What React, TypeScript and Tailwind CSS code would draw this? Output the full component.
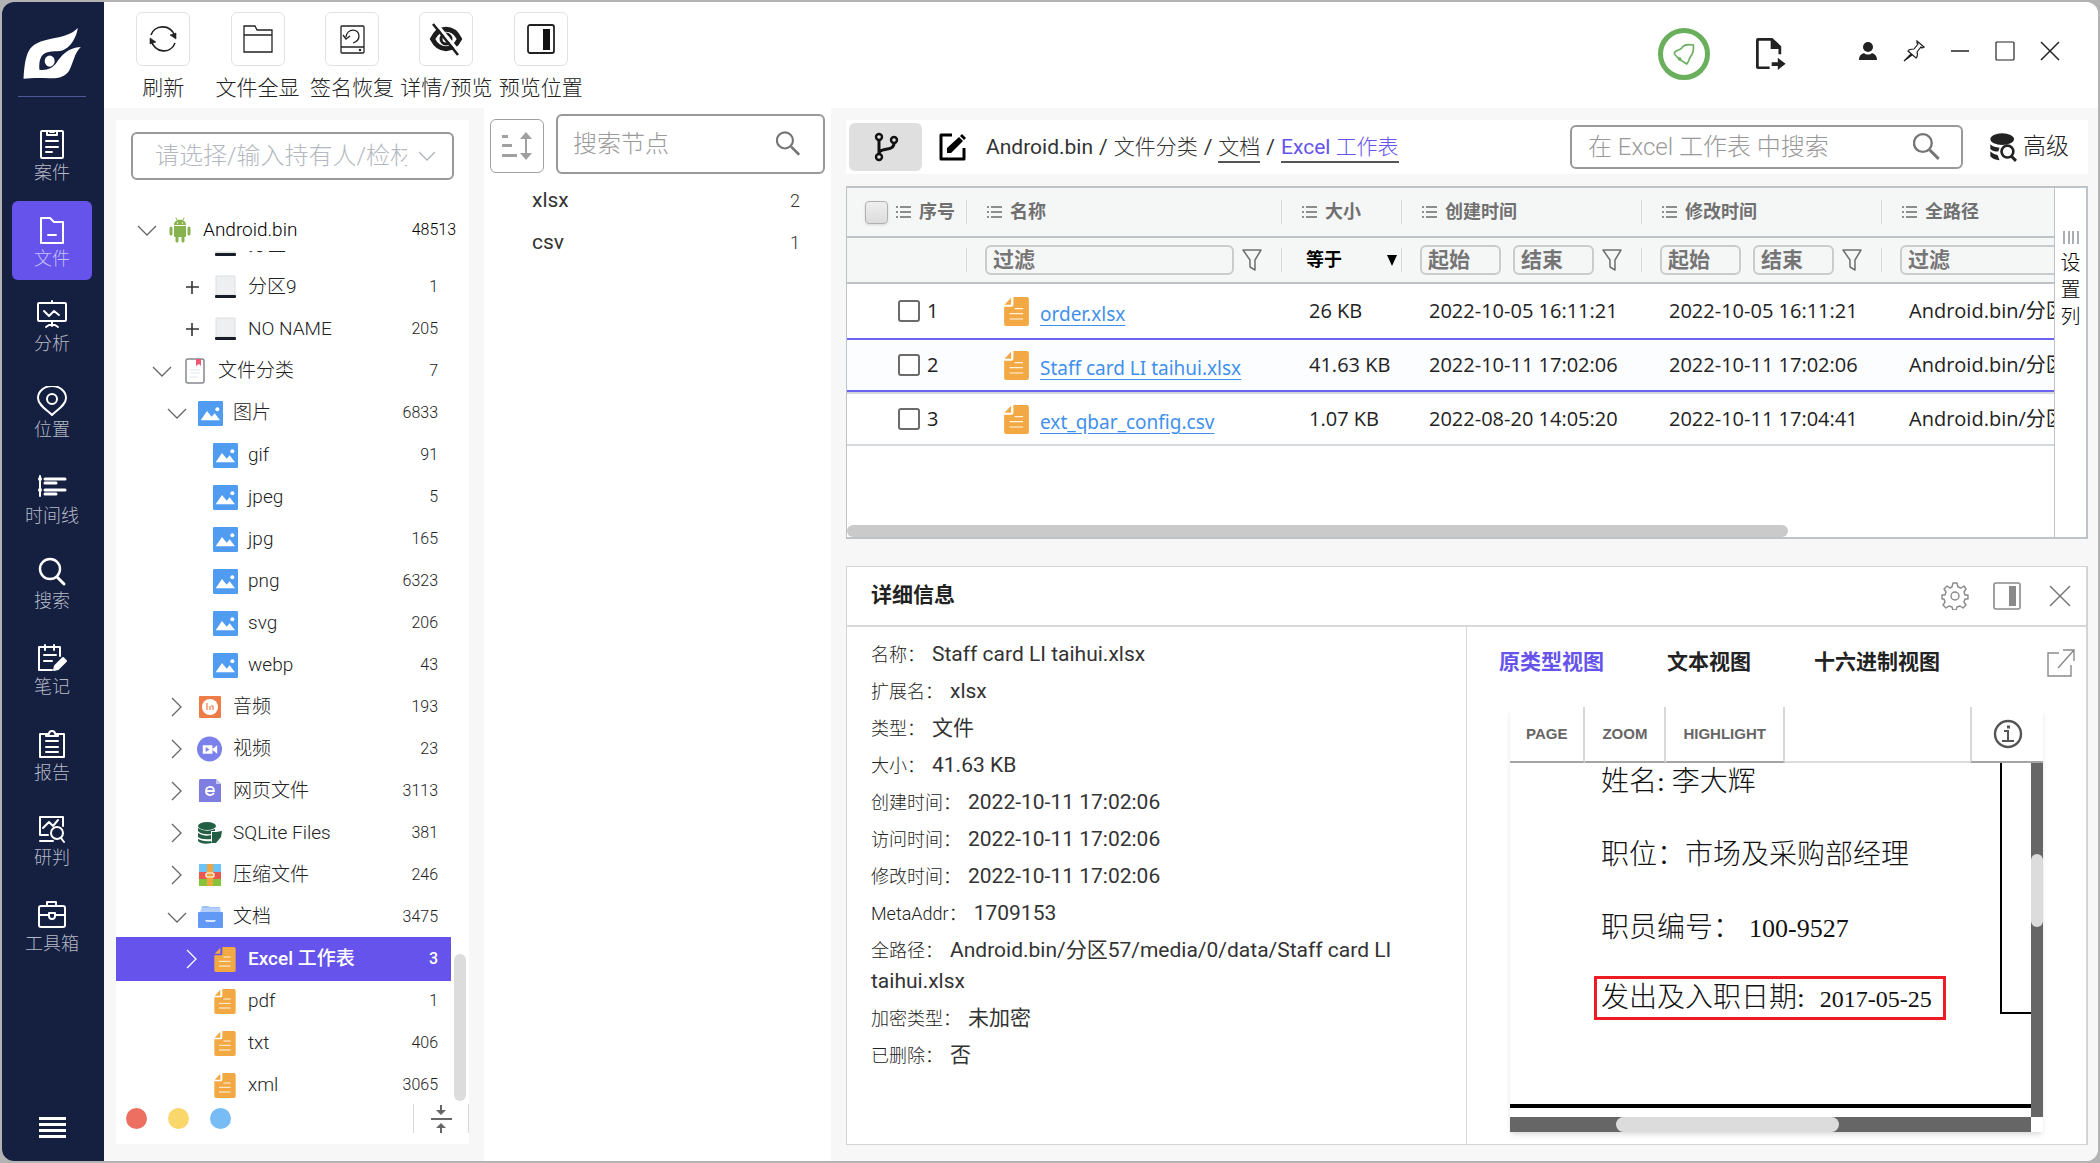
import type { ReactNode } from 'react'

type FileKind = 'drive' | 'category' | 'image' | 'audio' | 'video' | 'web' | 'sqlite' | 'zip' | 'docs' | 'doc'

interface TreeRow {
  label: string
  count?: string
  kind: FileKind
  depth: 1 | 2 | 3
  toggle?: 'open' | 'closed' | 'plus'
  selected?: boolean
}

const treeRows: TreeRow[] = [
  { label: '分区8', kind: 'drive', depth: 3 },
  { label: '分区9', count: '1', kind: 'drive', depth: 3, toggle: 'plus' },
  { label: 'NO NAME', count: '205', kind: 'drive', depth: 3, toggle: 'plus' },
  { label: '文件分类', count: '7', kind: 'category', depth: 1, toggle: 'open' },
  { label: '图片', count: '6833', kind: 'image', depth: 2, toggle: 'open' },
  { label: 'gif', count: '91', kind: 'image', depth: 3 },
  { label: 'jpeg', count: '5', kind: 'image', depth: 3 },
  { label: 'jpg', count: '165', kind: 'image', depth: 3 },
  { label: 'png', count: '6323', kind: 'image', depth: 3 },
  { label: 'svg', count: '206', kind: 'image', depth: 3 },
  { label: 'webp', count: '43', kind: 'image', depth: 3 },
  { label: '音频', count: '193', kind: 'audio', depth: 2, toggle: 'closed' },
  { label: '视频', count: '23', kind: 'video', depth: 2, toggle: 'closed' },
  { label: '网页文件', count: '3113', kind: 'web', depth: 2, toggle: 'closed' },
  { label: 'SQLite Files', count: '381', kind: 'sqlite', depth: 2, toggle: 'closed' },
  { label: '压缩文件', count: '246', kind: 'zip', depth: 2, toggle: 'closed' },
  { label: '文档', count: '3475', kind: 'docs', depth: 2, toggle: 'open' },
  { label: 'Excel 工作表', count: '3', kind: 'doc', depth: 3, toggle: 'closed', selected: true },
  { label: 'pdf', count: '1', kind: 'doc', depth: 3 },
  { label: 'txt', count: '406', kind: 'doc', depth: 3 },
  { label: 'xml', count: '3065', kind: 'doc', depth: 3 }
]

const depthClasses = {
  1: 'pl-[31px]',
  2: 'pl-[46px]',
  3: 'pl-[61px]'
}

const files = [
  { name: 'order.xlsx', size: '26 KB', created: '2022-10-05 16:11:21', modified: '2022-10-05 16:11:21' },
  { name: 'Staff card LI taihui.xlsx', size: '41.63 KB', created: '2022-10-11 17:02:06', modified: '2022-10-11 17:02:06' },
  { name: 'ext_qbar_config.csv', size: '1.07 KB', created: '2022-08-20 14:05:20', modified: '2022-10-11 17:04:41' }
]

const rowClasses = [
  'h-[56px] border-b-2 border-[#6c63f0]',
  'h-[52px] border-b-2 border-[#6c63f0] bg-[#fcfdff]',
  'h-[54px] border-y-2 border-[#d5d9dc]'
]

const details = [
  ['名称：', 'Staff card LI taihui.xlsx'],
  ['扩展名：', 'xlsx'],
  ['类型：', '文件'],
  ['大小：', '41.63 KB'],
  ['创建时间：', '2022-10-11 17:02:06'],
  ['访问时间：', '2022-10-11 17:02:06'],
  ['修改时间：', '2022-10-11 17:02:06'],
  ['MetaAddr：', '1709153'],
  ['全路径：', 'Android.bin/分区57/media/0/data/Staff card LI taihui.xlsx'],
  ['加密类型：', '未加密'],
  ['已删除：', '否']
]

function Logo() {
  return (
    <svg className="h-[51px] w-[58px]" viewBox="42 54 174 154" fill="#fff">
      <path d="M43 207C45 172 48 145 58 125C70 102 95 93 130 86C162 80 190 72 207 54C203 82 186 112 160 122C142 127 112 119 97 140C90 152 90 168 91 180C115 183 132 174 143 158C156 138 178 112 216 111C196 130 194 158 181 182C170 200 150 207 120 206C90 204 65 205 43 207Z" />
      <ellipse cx="122" cy="154" rx="15" ry="17" />
    </svg>
  )
}

// Sidebar glyphs share a 30x30 grid with a 2px stroke
function NavIcon({ children }: { children: ReactNode }) {
  return (
    <svg
      className="size-[30px]"
      viewBox="0 0 30 30"
      fill="none"
      stroke="#fff"
      strokeWidth="2"
      strokeLinecap="round"
      strokeLinejoin="round"
    >
      {children}
    </svg>
  )
}

const navItems: { label: string; icon: ReactNode; active?: boolean }[] = [
  {
    label: '案件',
    icon: (
      <>
        <rect x="4" y="2" width="22" height="27" rx="1" />
        <path d="M10 2v4h10V2M13 3h4M9 12h12M9 18h12M9 23h6" />
      </>
    )
  },
  {
    label: '文件',
    active: true,
    icon: <path d="M4 3h9l4 4h9v21H4zM11 20h8" />
  },
  {
    label: '分析',
    icon: (
      <>
        <path d="M15 1v2M15 21v5M9 27l3-2h6l3 2" />
        <rect x="1" y="3" width="28" height="18" rx="1" />
        <path d="M7 11l5 5 5-5 5 4" />
      </>
    )
  },
  {
    label: '位置',
    icon: (
      <>
        <path d="M15 29C10 24 1 19 1 12a14 12 0 0 1 28 0c0 7-9 12-14 17z" />
        <circle cx="15" cy="13" r="5" />
      </>
    )
  },
  {
    label: '时间线',
    icon: (
      <>
        <path strokeWidth="3" d="M8 7h20M8 11h11M8 18h20M8 22h11" />
        <path d="M3 4v20" />
        <circle cx="3" cy="7" r="1" />
        <circle cx="3" cy="18" r="1" />
      </>
    )
  },
  {
    label: '搜索',
    icon: (
      <>
        <circle cx="13" cy="12" r="10" strokeWidth="2.400" />
        <path strokeWidth="3" d="M20 20l7 7" />
      </>
    )
  },
  {
    label: '笔记',
    icon: (
      <>
        <path d="M15 27H2V4h21v9M8 2v5M17 2v5M7 12h12M7 18h8" />
        <path fill="#fff" d="M17 27l1-4 8-8 3 3-8 8z" />
      </>
    )
  },
  {
    label: '报告',
    icon: <path d="M8 5H3v23h24V5h-5M9 7V5h3c0-4 6-4 6 0h3v2zM9 12h12M9 18h12M9 23h12" />
  },
  {
    label: '研判',
    icon: (
      <>
        <path d="M26 12V3H3v18h8M3 27h13M6 14l6-6 4 4 5-6" />
        <circle cx="20" cy="19" r="6" />
        <path d="M24 24l3 4" />
      </>
    )
  },
  {
    label: '工具箱',
    icon: (
      <>
        <rect x="2" y="6" width="26" height="21" rx="2" />
        <path d="M10 6V2h9v4M2 15h10M18 15h10M12 13v3c0 4 6 4 6 0v-3z" />
      </>
    )
  }
]

function Sidebar() {
  return (
    <nav className="flex w-[102px] shrink-0 flex-col items-center bg-[#151f40] pt-[26px] pr-[2px]">
      <Logo />
      <div className="mt-[17px] h-px w-[68px] bg-[#4b5797]" />
      <div className="mt-[15px] grid h-[857px] auto-rows-fr">
        {navItems.map((item) => (
          <button
            key={item.label}
            type="button"
            className={`my-[3px] flex w-[80px] flex-col items-center justify-center rounded-md pt-[6px] text-lg leading-[28px] font-light ${
              item.active ? 'bg-[#6553ec] text-[#c5c0f8]' : 'text-[#b4b9c6]'
            }`}
          >
            <NavIcon>{item.icon}</NavIcon>
            {item.label}
          </button>
        ))}
      </div>
      <button type="button" aria-label="菜单" className="mt-auto mb-[23px] flex w-[27px] flex-col gap-[3px]">
        <span className="h-[3px] bg-white" />
        <span className="h-[3px] bg-white" />
        <span className="h-[3px] bg-white" />
        <span className="h-[3px] bg-white" />
      </button>
    </nav>
  )
}

const tools = [
  {
    label: '刷新',
    icon: (
      <svg className="size-[30px]" viewBox="0 0 30 30" fill="none" stroke="#222" strokeWidth="1.6">
        <path d="M3 11C6 1 22 -1 27 12M27 19C23 30 7 30 3 16" />
        <path fill="#222" d="M22 11l6 4V9zM8 18l-6-4v6z" strokeWidth="0.6" />
      </svg>
    )
  },
  {
    label: '文件全显',
    icon: (
      <svg className="size-[30px]" viewBox="0 0 30 30" fill="none" stroke="#222" strokeWidth="1.3">
        <path d="M1 2h11l2 4h15v22H1zM1 11h28" />
      </svg>
    )
  },
  {
    label: '签名恢复',
    icon: (
      <svg className="size-[30px]" viewBox="0 0 30 30" fill="none" stroke="#222" strokeWidth="1.3">
        <rect x="4" y="2" width="23" height="27" rx="1" />
        <path d="M4 23h23M9 13c1-9 13-9 13-1 0 4-3 6-6 7M6 11l3 4 4-3" />
        <circle cx="23" cy="26" r="0.6" />
      </svg>
    )
  },
  {
    label: '详情/预览',
    icon: (
      <svg className="size-[34px]" viewBox="0 0 34 34" fill="none" stroke="#1c1c1c">
        <path strokeWidth="5" d="M3.500 17C10 4 24 4 30.500 17C24 30 10 30 3.500 17z" />
        <circle cx="17" cy="17" r="5" strokeWidth="3" />
        <path stroke="#fff" strokeWidth="3" d="M6 0l25 31" />
        <path strokeWidth="2.500" d="M4 2l25 31" />
      </svg>
    )
  },
  {
    label: '预览位置',
    icon: (
      <svg className="size-[30px]" viewBox="0 0 30 30" fill="none" stroke="#222" strokeWidth="1.800">
        <rect x="2" y="1" width="26" height="28" rx="2" />
        <rect x="17" y="5" width="7" height="21" fill="#111" stroke="none" />
      </svg>
    )
  }
]

function TopBar() {
  return (
    <header className="flex h-[106px] shrink-0 justify-between bg-white pr-[38px] pl-3">
      <div className="grid w-[472px] grid-cols-5 pt-[10px]">
        {tools.map((tool) => (
          <button key={tool.label} type="button" className="flex flex-col items-center gap-2 self-start">
            <span className="flex size-[54px] items-center justify-center rounded-md border border-[#e2e2e2]">
              {tool.icon}
            </span>
            <span className="text-[21px] leading-[28px] font-light whitespace-nowrap text-[#222]">{tool.label}</span>
          </button>
        ))}
      </div>
      <div className="flex items-start pt-[26px]">
        <button
          type="button"
          aria-label="通知"
          className="flex size-[52px] items-center justify-center rounded-full border-[5px] border-[#69af5c]"
        >
          <svg className="size-[22px]" viewBox="102 98 64 66" fill="none" stroke="#69af5c" strokeWidth="5">
            <path d="M105 128C108 118 125 120 128 112C134 102 150 102 162 104C163 116 162 130 154 138C147 146 150 155 142 161L122 148C116 140 106 138 105 128Z" />
            <circle cx="121" cy="146" r="3" fill="#69af5c" />
          </svg>
        </button>
        <button type="button" aria-label="导出" className="mt-[10px] ml-[46px]">
          <svg className="h-[32px] w-[30px]" viewBox="348 84 88 94" fill="#222">
            <path d="M354 84H396L422 108V132H414V116H391V92H356V168H388V175H354Q348 175 348 170V90Q348 84 354 84Z" />
            <path d="M394 155h18v-13l23 18-23 18v-12h-18z" />
          </svg>
        </button>
        <div className="mt-[12px] ml-[72px] flex items-center gap-[25px]">
          <button type="button" aria-label="用户">
            <svg className="size-5" viewBox="0 0 20 20" fill="#222">
              <circle cx="10" cy="6" r="5" />
              <path d="M1 19c0-5 3-6 5-7 2 2 6 2 8 0 2 1 5 2 5 7z" />
            </svg>
          </button>
          <button type="button" aria-label="置顶">
            <svg className="size-[22px]" viewBox="0 0 22 22" fill="none" stroke="#222" strokeWidth="1.200">
              <path d="M14 1l7 6-2 1-1-1-4 5c1 3 0 5-1 6l-8-7c1-2 3-2 6-2l4-5-1-1zM8 14l-7 7M9 15l-8 6" />
            </svg>
          </button>
          <button type="button" aria-label="最小化">
            <svg className="size-5" viewBox="0 0 20 20" stroke="#222" strokeWidth="1.500">
              <path d="M1 10h18" />
            </svg>
          </button>
          <button type="button" aria-label="最大化">
            <svg className="size-5" viewBox="0 0 20 20" fill="none" stroke="#222" strokeWidth="1.200">
              <rect x="1" y="1" width="18" height="18" rx="1" />
            </svg>
          </button>
          <button type="button" aria-label="关闭">
            <svg className="size-5" viewBox="0 0 20 20" stroke="#222" strokeWidth="1.500">
              <path d="M1 1l18 18M19 1L1 19" />
            </svg>
          </button>
        </div>
      </div>
    </header>
  )
}

function DocIcon({ className = 'h-[25px] w-[22px]' }: { className?: string }) {
  return (
    <svg className={className} viewBox="0 0 64 75">
      <path fill="#f2a944" d="M24 0H59Q64 0 64 5V70Q64 75 59 75H5Q0 75 0 70V25H19Q24 25 24 20ZM18 2V20H1Z" />
      <path stroke="#fff3df" strokeWidth="3" d="M27 30h22M14 43h35M14 57h35" />
    </svg>
  )
}

function AndroidIcon() {
  return (
    <svg className="h-[26px] w-[22px]" viewBox="0 0 22 26" fill="#86b34d" strokeLinecap="round">
      <path d="M5 8c0-7 12-7 12 0zM5 9h12v10q0 1-1 1H6q-1 0-1-1z" />
      <path stroke="#86b34d" strokeWidth="3" d="M2 11v6M20 11v6M8 19v5M14 19v5" />
      <path stroke="#86b34d" d="M7 1l1 2M15 1l-1 2" />
      <path stroke="#fff" strokeWidth="1.400" d="M8.500 6h0.010M13.500 6h0.010" />
    </svg>
  )
}

function KindIcon({ kind }: { kind: FileKind }) {
  switch (kind) {
    case 'drive':
      return (
        <svg className="h-[24px] w-[21px]" viewBox="0 0 21 24">
          <path fill="#eeeff1" stroke="#dcdee0" d="M1 1h19l0 19H1z" />
          <rect y="20" width="21" height="3" rx="1" fill="#161d29" />
        </svg>
      )
    case 'category':
      return (
        <svg className="h-[26px] w-[20px]" viewBox="0 0 20 26">
          <rect x="1" y="1" width="18" height="24" rx="2" fill="#fff" stroke="#85888f" strokeWidth="1.500" />
          <path fill="#ef5777" d="M11 1h5v7l-2-2-3 2z" />
          <path stroke="#e3e5ea" d="M5 12h10M5 15h10M5 19h8" />
        </svg>
      )
    case 'image':
      return (
        <svg className="size-[25px]" viewBox="0 0 75 75">
          <rect width="75" height="75" rx="4" fill="#4f9cf0" />
          <path fill="#fff" d="M8 58L27 30L41 47L50 37L66 58Z" />
          <circle cx="58" cy="25" r="6" fill="#fff" />
        </svg>
      )
    case 'audio':
      return (
        <svg className="size-[22px]" viewBox="0 0 22 22">
          <rect width="22" height="22" rx="1" fill="#ee7c48" />
          <circle cx="11" cy="11" r="8" fill="#fff" />
          <path stroke="#ee7c48" strokeWidth="1.200" fill="none" d="M8 7v7M11 14v-4M14 14v-4h-2" />
        </svg>
      )
    case 'video':
      return (
        <svg className="size-[27px]" viewBox="0 0 27 27">
          <circle cx="13" cy="13" r="13" fill="#7b81ea" />
          <path fill="#fff" d="M6 9h10v9H6zM16 13l5-4v9l-5-4z" />
          <path fill="#7b81ea" d="M9 11l4 2.500-4 2.500z" />
        </svg>
      )
    case 'web':
      return (
        <svg className="h-[24px] w-[22px]" viewBox="0 0 22 24" fill="none">
          <path fill="#7e7ee0" d="M1 0h16l5 5v18H0V1z" />
          <path fill="#c9c8f4" d="M17 0v5h5z" />
          <path stroke="#fff" strokeWidth="1.800" d="M7 12h8c0-6-8-5-8 0 0 5 6 5 8 2" />
        </svg>
      )
    case 'sqlite':
      return (
        <svg className="h-[22px] w-[24px]" viewBox="0 0 24 22" fill="#235f44">
          <ellipse cx="9" cy="4" rx="9" ry="4" />
          <path d="M0 6q8 5 17 1v2h-4v3Q4 13 0 9zM0 11q6 4 13 2v4Q4 18 0 15zM0 17q6 3 13 2l1 2Q4 23 0 19zM14 10h4l6-1-1 6-5 6h-4z" />
        </svg>
      )
    case 'zip':
      return (
        <svg className="size-[22px]" viewBox="0 0 22 22">
          <path fill="#6cc3f7" d="M0 0h22v8H0z" />
          <path fill="#e9564e" d="M0 8h22v7H0z" />
          <path fill="#86c43c" d="M0 15h22v7H0z" />
          <path fill="#f0a63c" d="M8 0h6v22H8z" />
          <rect x="7" y="9" width="8" height="4" rx="1" fill="#f0a63c" stroke="#fff" strokeWidth="1.200" />
        </svg>
      )
    case 'docs':
      return (
        <svg className="h-[22px] w-[25px]" viewBox="0 0 25 22">
          <path fill="#9cc0fa" d="M4 0h6l2 1h10l1 6H2z" />
          <path stroke="#d7e5fd" strokeWidth="0.800" d="M3 3h20M3 5h20" />
          <rect y="6" width="25" height="16" rx="1" fill="#6199f5" />
          <path stroke="#fff" strokeWidth="1.300" fill="none" d="M8 14q0 1 1 1h7q1 0 1-1" />
        </svg>
      )
    default:
      return <DocIcon />
  }
}

function Toggle({ state, light }: { state?: TreeRow['toggle']; light?: boolean }) {
  const stroke = light ? '#fff' : '#666'
  return (
    <span className="flex w-[30px] shrink-0 justify-center">
      {state && (
        <svg className="size-5" viewBox="0 0 20 20" fill="none" stroke={stroke} strokeWidth="1.300">
          {state === 'open' && <path d="M1 6l9 9 9-9" />}
          {state === 'closed' && <path d="M5 1l9 9-9 9" />}
          {state === 'plus' && <path stroke="#333" strokeWidth="1.600" d="M4 10h13M10 4v13" />}
        </svg>
      )}
    </span>
  )
}

function FileTree() {
  return (
    <aside className="flex w-[380px] shrink-0 flex-col bg-[#f7f7f7] pt-3 pr-[15px] pb-[17px] pl-3">
      <div className="flex min-h-0 flex-1 flex-col bg-white pt-3">
        <div className="mx-[15px] flex h-[48px] shrink-0 items-center rounded-md border-2 border-[#999] pl-[22px]">
          <input
            aria-label="持有人/检材"
            placeholder="请选择/输入持有人/检材"
            className="w-[252px] text-2xl font-light outline-none placeholder:text-[#b4b8c0]"
          />
          <svg className="ml-3 size-4" viewBox="0 0 16 16" fill="none" stroke="#b0b4bc" strokeWidth="1.300">
            <path d="M0 4l8 8 8-8" />
          </svg>
        </div>
        <div className="mt-[29px] flex h-[42px] shrink-0 items-center pr-[13px] pl-4">
          <Toggle state="open" />
          <span className="ml-[5px] flex w-[26px] justify-center">
            <AndroidIcon />
          </span>
          <span className="ml-[10px] flex-1 text-[19px] font-light text-black">Android.bin</span>
          <span className="text-base font-light text-black">48513</span>
        </div>
        <div className="relative min-h-0 flex-1 overflow-hidden">
          <ul className="-mt-[27px] w-[335px]">
            {treeRows.map((row) => (
              <li
                key={row.label}
                className={`flex items-center pr-[13px] ${depthClasses[row.depth]} ${
                  row.selected ? '-my-px h-[44px] bg-[#6553ec] font-medium text-white' : 'h-[42px] font-light text-[#222]'
                }`}
              >
                <Toggle state={row.toggle} light={row.selected} />
                <span className="ml-[5px] flex w-[26px] shrink-0 justify-center">
                  <KindIcon kind={row.kind} />
                </span>
                <span className="ml-[10px] flex-1 text-[19px]">{row.label}</span>
                <span className="text-base">{row.count}</span>
              </li>
            ))}
          </ul>
          <div className="absolute right-[3px] bottom-[3px] h-[147px] w-3 rounded-full bg-[#dcdcdc]" />
        </div>
        <div className="flex h-[40px] shrink-0 items-start justify-between pl-[10px]">
          <div className="flex gap-[21px] pt-1">
            <span className="size-[21px] rounded-full bg-[#ec6f62]" />
            <span className="size-[21px] rounded-full bg-[#f9d76b]" />
            <span className="size-[21px] rounded-full bg-[#77bcf5]" />
          </div>
          <button
            type="button"
            aria-label="折叠"
            className="flex h-[29px] w-[56px] items-center justify-center border-x border-[#d8d8d8]"
          >
            <svg className="h-[28px] w-[21px]" viewBox="0 0 21 28" fill="#666">
              <path d="M0 13h21v2H0zM9 0h2v5h4l-5 5-5-5h4zM9 28h2v-5h4l-5-5-5 5h4z" />
            </svg>
          </button>
        </div>
      </div>
    </aside>
  )
}

function SearchIcon({ className = 'size-[28px]' }: { className?: string }) {
  return (
    <svg className={className} viewBox="0 0 28 28" fill="none" stroke="#757575">
      <circle cx="10" cy="10" r="9" strokeWidth="2.400" />
      <path strokeWidth="3" d="M17 17l9 9" />
    </svg>
  )
}

function NodeList() {
  return (
    <section className="w-[347px] shrink-0 bg-white px-[6px] pt-[6px]">
      <div className="flex items-center gap-3">
        <button
          type="button"
          aria-label="排序"
          className="mt-1 flex size-[54px] items-center justify-center rounded-md border border-[#a0a0a0]"
        >
          <svg className="h-[28px] w-[31px]" viewBox="0 0 31 28" fill="#a0a0a0">
            <path d="M0 3h6v3H0zM0 12h10v3H0zM0 22h15v3H0zM23 7h-5l6-7 6 7h-5v14h5l-6 7-6-7h5z" />
          </svg>
        </button>
        <div className="flex h-[60px] flex-1 items-center rounded-md border-2 border-[#999] pr-[22px] pl-[15px]">
          <input
            aria-label="搜索节点"
            placeholder="搜索节点"
            className="w-full min-w-0 text-2xl font-light outline-none placeholder:text-[#9a9a9a]"
          />
          <SearchIcon />
        </div>
      </div>
      <ul className="mt-[6px] pr-[25px] pl-[42px] text-[#333]">
        <li className="flex h-[42px] items-center justify-between text-[21px]">
          xlsx <span className="text-lg font-light">2</span>
        </li>
        <li className="flex h-[42px] items-center justify-between text-[21px]">
          csv <span className="text-lg font-light">1</span>
        </li>
      </ul>
    </section>
  )
}

function Breadcrumb() {
  return (
    <div className="flex h-[54px] shrink-0 items-center bg-white pr-[19px] pl-[3px] text-[21px] text-[#333]">
      <button
        type="button"
        aria-label="分支"
        className="flex h-[48px] w-[73px] items-center justify-center rounded-md bg-[#dfdfdf]"
      >
        <svg className="h-[30px] w-[26px]" viewBox="0 0 26 30" fill="none" stroke="#111" strokeWidth="2.400">
          <circle cx="6" cy="5" r="3" />
          <circle cx="21" cy="8" r="3" />
          <circle cx="6" cy="25" r="3" />
          <path strokeWidth="3" d="M6 8v14M21 11c0 9-13 4-15 10" />
        </svg>
      </button>
      <button type="button" aria-label="编辑路径" className="ml-[17px]">
        <svg className="h-[28px] w-[28px]" viewBox="0 0 28 28" fill="none" stroke="#000" strokeWidth="3">
          <path strokeLinejoin="round" d="M13 2H2v24h23V15" />
          <path fill="#000" stroke="none" d="M8 20v-5L20 4l4 4-12 12zM21 3l2-2 4 4-2 2z" />
        </svg>
      </button>
      <div className="ml-[19px] flex items-center gap-[6px] pt-[2px] whitespace-nowrap">
        <a href="#root-node">Android.bin</a>
        <span>/</span>
        <a href="#category" className="font-light">
          文件分类
        </a>
        <span>/</span>
        <a href="#docs" className="border-b-2 border-[#555] leading-[28px] font-light">
          文档
        </a>
        <span>/</span>
        <a href="#excel" className="border-b-2 border-[#555] leading-[28px] text-[#6553ec]">
          Excel <span className="font-light">工作表</span>
        </a>
      </div>
      <div className="ml-auto flex h-[44px] w-[393px] items-center rounded-md border-2 border-[#999] pr-5 pl-4">
        <input
          aria-label="在 Excel 工作表 中搜索"
          placeholder="在 Excel 工作表 中搜索"
          className="w-full min-w-0 text-2xl font-light outline-none placeholder:text-[#999]"
        />
        <SearchIcon className="size-[30px]" />
      </div>
      <button type="button" className="ml-[27px] flex items-center gap-[6px] text-[23px] font-light text-[#222]">
        <svg className="h-[29px] w-[27px]" viewBox="1049 368 82 87" fill="#222">
          <ellipse cx="1086" cy="386" rx="36" ry="18" />
          <path d="M1050 402q10 10 28 10l-4 12q-16 0-24-8zM1050 424q8 8 22 10l6 16q-20-2-28-12z" />
          <circle cx="1102" cy="424" r="18" fill="#fff" stroke="#222" strokeWidth="8" />
          <path stroke="#222" strokeWidth="9" d="M1114 438l14 14" />
        </svg>
        高级
      </button>
    </div>
  )
}

function HeadCell({ label, last, children }: { label: string; last?: boolean; children?: ReactNode }) {
  return (
    <th scope="col" className="border-b-2 border-[#bdc3c7] p-0 text-left font-bold">
      <div
        className={`flex h-6 items-center gap-2 ${children ? 'pl-[18px]' : 'pl-5'} ${
          last ? '' : 'border-r border-[#d5d9da]'
        }`}
      >
        {children}
        <svg className="h-[14px] w-[15px] shrink-0" viewBox="0 0 15 14" stroke="#6b6b6b" strokeWidth="1.500">
          <path d="M0 2h2M4 2h11M0 7h2M4 7h11M0 12h2M4 12h11" />
        </svg>
        {label}
      </div>
    </th>
  )
}

function Funnel() {
  return (
    <svg className="h-[22px] w-[20px] shrink-0" viewBox="0 0 20 22" fill="none" stroke="#707070" strokeWidth="1.500">
      <path strokeLinejoin="round" d="M1 1h18l-6 10v10l-5-3v-7z" />
    </svg>
  )
}

const filterInput =
  'h-[30px] min-w-0 rounded-md border-2 border-[#c9cccc] bg-transparent px-[6px] text-[21px] font-bold outline-none placeholder:text-[#757575]'

function RangeFilter({ label }: { label: string }) {
  return (
    <td className="border-b-2 border-[#bdc3c7] p-0">
      <div className="flex h-6 items-center border-r border-[#d5d9da] pl-[18px]">
        <input aria-label={`${label}起始`} placeholder="起始" className={`${filterInput} w-[81px]`} />
        <input aria-label={`${label}结束`} placeholder="结束" className={`${filterInput} mr-2 ml-3 w-[81px]`} />
        <Funnel />
      </div>
    </td>
  )
}

function FileTable() {
  return (
    <section className="flex min-h-0 flex-[351] border-2 border-l border-[#bdc3c7] bg-white">
      <div className="flex min-w-0 flex-1 flex-col overflow-hidden">
        <table className="w-[1551px] table-fixed border-separate border-spacing-0 text-xl text-[#222]">
          <colgroup>
            <col className="w-[120px]" />
            <col className="w-[315px]" />
            <col className="w-[120px]" />
            <col className="w-[240px]" />
            <col className="w-[240px]" />
            <col />
          </colgroup>
          <thead className="bg-[#f5f7f7] text-lg text-[#707070]">
            <tr className="h-[50px]">
              <HeadCell label="序号">
                <input
                  type="checkbox"
                  aria-label="全选"
                  className="size-[23px] shrink-0 appearance-none rounded-sm border border-[#b0b0b0] bg-linear-to-b from-[#efefef] to-[#dcdcdc] shadow-sm"
                />
              </HeadCell>
              <HeadCell label="名称" />
              <HeadCell label="大小" />
              <HeadCell label="创建时间" />
              <HeadCell label="修改时间" />
              <HeadCell label="全路径" last />
            </tr>
            <tr className="h-[46px]">
              <td className="border-b-2 border-[#bdc3c7] p-0">
                <div className="h-6 border-r border-[#d5d9da]" />
              </td>
              <td className="border-b-2 border-[#bdc3c7] p-0">
                <div className="flex h-6 items-center gap-2 border-r border-[#d5d9da] pl-[18px]">
                  <input aria-label="名称过滤" placeholder="过滤" className={`${filterInput} w-[249px]`} />
                  <Funnel />
                </div>
              </td>
              <td className="border-b-2 border-[#bdc3c7] p-0">
                <div className="flex h-6 items-center justify-between border-r border-[#d5d9da] pr-1 pl-6">
                  <select aria-label="大小条件" className="appearance-none bg-transparent font-bold text-black">
                    <option>等于</option>
                  </select>
                  <svg className="h-[11px] w-[10px]" viewBox="0 0 10 11">
                    <path d="M0 0h10L5 11z" />
                  </svg>
                </div>
              </td>
              <RangeFilter label="创建时间" />
              <RangeFilter label="修改时间" />
              <td className="border-b-2 border-[#bdc3c7] p-0">
                <div className="flex h-6 items-center pl-[18px]">
                  <input aria-label="全路径过滤" placeholder="过滤" className={`${filterInput} w-[400px]`} />
                </div>
              </td>
            </tr>
          </thead>
          <tbody className="font-['Open_Sans','Noto_Sans_CJK_SC',sans-serif]">
            {files.map((file, i) => (
              <tr key={file.name}>
                <td className={`p-0 ${rowClasses[i]}`}>
                  <label className="flex items-center gap-[7px] pl-[51px]">
                    <input
                      type="checkbox"
                      className="size-[22px] appearance-none rounded-[3px] border-2 border-[#6b6b6b] bg-white"
                    />
                    {i + 1}
                  </label>
                </td>
                <td className={`p-0 ${rowClasses[i]}`}>
                  <div className="flex items-center gap-[11px] pl-[37px]">
                    <DocIcon className="h-[29px] w-[25px]" />
                    <a
                      href="#file"
                      className="pt-[6px] font-['Noto_Sans',sans-serif] text-[19px] text-[#3f90ec] underline underline-offset-4"
                    >
                      {file.name}
                    </a>
                  </div>
                </td>
                <td className={`p-0 pl-[27px] whitespace-nowrap ${rowClasses[i]}`}>{file.size}</td>
                <td className={`p-0 pl-[27px] whitespace-nowrap ${rowClasses[i]}`}>{file.created}</td>
                <td className={`p-0 pl-[27px] whitespace-nowrap ${rowClasses[i]}`}>{file.modified}</td>
                <td className={`p-0 pl-[27px] whitespace-nowrap ${rowClasses[i]}`}>Android.bin/分区57/media/0</td>
              </tr>
            ))}
          </tbody>
        </table>
        <div className="mt-auto h-3 w-[78%] rounded-full bg-[#cacaca]" />
      </div>
      <button
        type="button"
        className="flex w-[32px] shrink-0 flex-col items-center border-l border-[#bdc3c7] pt-[43px] text-xl leading-[27px] text-[#222]"
      >
        <svg className="mb-[6px] h-[13px] w-[16px]" viewBox="0 0 16 13" stroke="#8c9498" strokeWidth="1.500">
          <path d="M1 0v13M6 0v13M10 0v13M15 0v13" />
        </svg>
        <span className="w-5 font-light break-all text-black">设置列</span>
      </button>
    </section>
  )
}

function DocumentPreview() {
  return (
    <div className="mr-[43px] ml-[43px] flex min-h-0 flex-1 flex-col bg-white shadow-md">
      <div className="flex h-[56px] shrink-0 font-['Liberation_Sans',sans-serif] text-[15px] font-bold text-[#666]">
        <button type="button" className="border-r-2 border-b-2 border-r-[#d8d8d8] border-b-[#a5a5a5] px-4">
          PAGE
        </button>
        <button type="button" className="border-r-2 border-b-2 border-r-[#d8d8d8] border-b-[#a5a5a5] px-[17px]">
          ZOOM
        </button>
        <button type="button" className="border-r-2 border-b-2 border-r-[#d8d8d8] border-b-[#a5a5a5] px-[17px]">
          HIGHLIGHT
        </button>
        <div className="flex-1 border-b-2 border-[#dcdcdc]" />
        <button
          type="button"
          aria-label="信息"
          className="flex w-[73px] items-center justify-center border-b-2 border-l-2 border-b-[#a5a5a5] border-l-[#d8d8d8]"
        >
          <svg className="size-[30px]" viewBox="0 0 30 30" fill="none" stroke="#555" strokeWidth="2">
            <circle cx="15" cy="15" r="13" strokeWidth="2.400" />
            <path d="M11 12h4v10M9 22h12" />
            <path strokeWidth="3" d="M14 8h3" />
          </svg>
        </button>
      </div>
      <div className="flex min-h-0 flex-1">
        <div className="flex min-w-0 flex-1 flex-col">
          <div className="flex min-h-0 flex-1 justify-between border-b-4 border-black font-['Liberation_Serif','Noto_Sans_CJK_SC',serif] text-[28px] leading-[38px] font-light text-[#111]">
            <div className="flex flex-col items-start gap-[35px] pl-[84px] whitespace-nowrap">
              <p className="pl-[7px]">姓名: 李大辉</p>
              <p className="pl-[7px]">职位：市场及采购部经理</p>
              <p className="pl-[7px]">
                职员编号：<span className="ml-2 text-[26px]">100-9527</span>
              </p>
              <p className="-mt-[7px] border-[3px] border-[#ed1c24] pr-[11px] pl-1">
                发出及入职日期: <span className="ml-2 text-2xl">2017-05-25</span>
              </p>
            </div>
            <div className="h-[251px] w-[31px] border-b-2 border-l-2 border-black" />
          </div>
          <div className="mt-[9px] flex h-[15px] shrink-0 bg-[#666] pl-[106px]">
            <div className="w-[223px] rounded-full bg-[#dcdcdc]" />
          </div>
        </div>
        <div className="mb-[15px] w-3 shrink-0 bg-[#666] pt-[91px]">
          <div className="h-[73px] rounded-full bg-[#dcdcdc]" />
        </div>
      </div>
    </div>
  )
}

function DetailPanel() {
  return (
    <section className="flex min-h-0 flex-[580] flex-col border border-r-2 border-[#d4d4d4] bg-white">
      <div className="flex h-[60px] shrink-0 items-center justify-between border-b-2 border-[#d8d8d8] pr-[15px] pl-6">
        <h2 className="text-[21px] font-bold text-[#222]">详细信息</h2>
        <div className="flex items-center gap-[28px]">
          <button type="button" aria-label="设置">
            <svg className="size-[28px]" viewBox="0 0 28 28" fill="none" stroke="#8a8a8a" strokeWidth="1.400">
              <path
                strokeLinejoin="round"
                d="M12 1h4l1 4 3 1 3-2 2 3-2 3 1 3 3 0v4h-3l-1 3 2 3-3 3-3-2-3 1-1 3h-3l-1-3-3-1-3 2-3-3 2-3-1-3H1v-4h3l1-3-2-3 3-3 3 2 2-1z"
              />
              <circle cx="14" cy="14" r="4" />
            </svg>
          </button>
          <button type="button" aria-label="切换预览" className="-ml-1">
            <svg className="size-[28px]" viewBox="0 0 28 28" fill="none" stroke="#8a8a8a" strokeWidth="1.600">
              <rect x="1" y="1" width="26" height="26" rx="2" />
              <rect x="16" y="4" width="7" height="20" fill="#8a8a8a" stroke="none" />
            </svg>
          </button>
          <button type="button" aria-label="关闭详情">
            <svg className="size-[22px]" viewBox="0 0 22 22" stroke="#777" strokeWidth="1.500">
              <path d="M1 1l20 20M21 1L1 21" />
            </svg>
          </button>
        </div>
      </div>
      <div className="flex min-h-0 flex-1">
        <dl className="flex-1 space-y-[6px] border-r border-[#d8d8d8] pt-3 pr-5 pl-6 text-[21px] leading-[31px] text-[#333]">
          {details.map(([label, value]) => (
            <div key={label}>
              <dt className="mr-[7px] inline text-lg font-light text-[#222]">{label}</dt>
              <dd className="inline">{value}</dd>
            </div>
          ))}
        </dl>
        <div className="flex w-[619px] shrink-0 flex-col pb-3">
          <div className="mb-[30px] flex h-[50px] items-end pr-[11px] pl-[32px] text-[21px] leading-[30px] font-bold text-[#222]">
            <button type="button" className="text-[#6553ec]">
              原类型视图
            </button>
            <button type="button" className="ml-[63px]">
              文本视图
            </button>
            <button type="button" className="ml-[63px]">
              十六进制视图
            </button>
            <button type="button" aria-label="在新窗口打开" className="ml-auto">
              <svg className="size-[28px]" viewBox="0 0 28 28" fill="none" stroke="#8a8a8a" strokeWidth="1.400">
                <path d="M12 4H1v23h23V16M16 1h11v11M27 1L11 19" />
              </svg>
            </button>
          </div>
          <DocumentPreview />
        </div>
      </div>
    </section>
  )
}

export default function App() {
  return (
    <div className="h-screen bg-[#b3b3b3] p-[2px] font-[Roboto,'Noto_Sans_CJK_SC',sans-serif]">
      <div className="flex h-full overflow-hidden rounded-xl bg-[#f7f7f7]">
        <Sidebar />
        <div className="flex min-w-0 flex-1 flex-col">
          <TopBar />
          <div className="flex min-h-0 flex-1">
            <FileTree />
            <NodeList />
            <main className="flex min-w-0 flex-1 flex-col bg-[#f7f7f7] pt-3 pr-[10px] pb-4 pl-[15px]">
              <Breadcrumb />
              <div className="mt-3 flex min-h-0 flex-1 flex-col gap-[27px]">
                <FileTable />
                <DetailPanel />
              </div>
            </main>
          </div>
        </div>
      </div>
    </div>
  )
}
